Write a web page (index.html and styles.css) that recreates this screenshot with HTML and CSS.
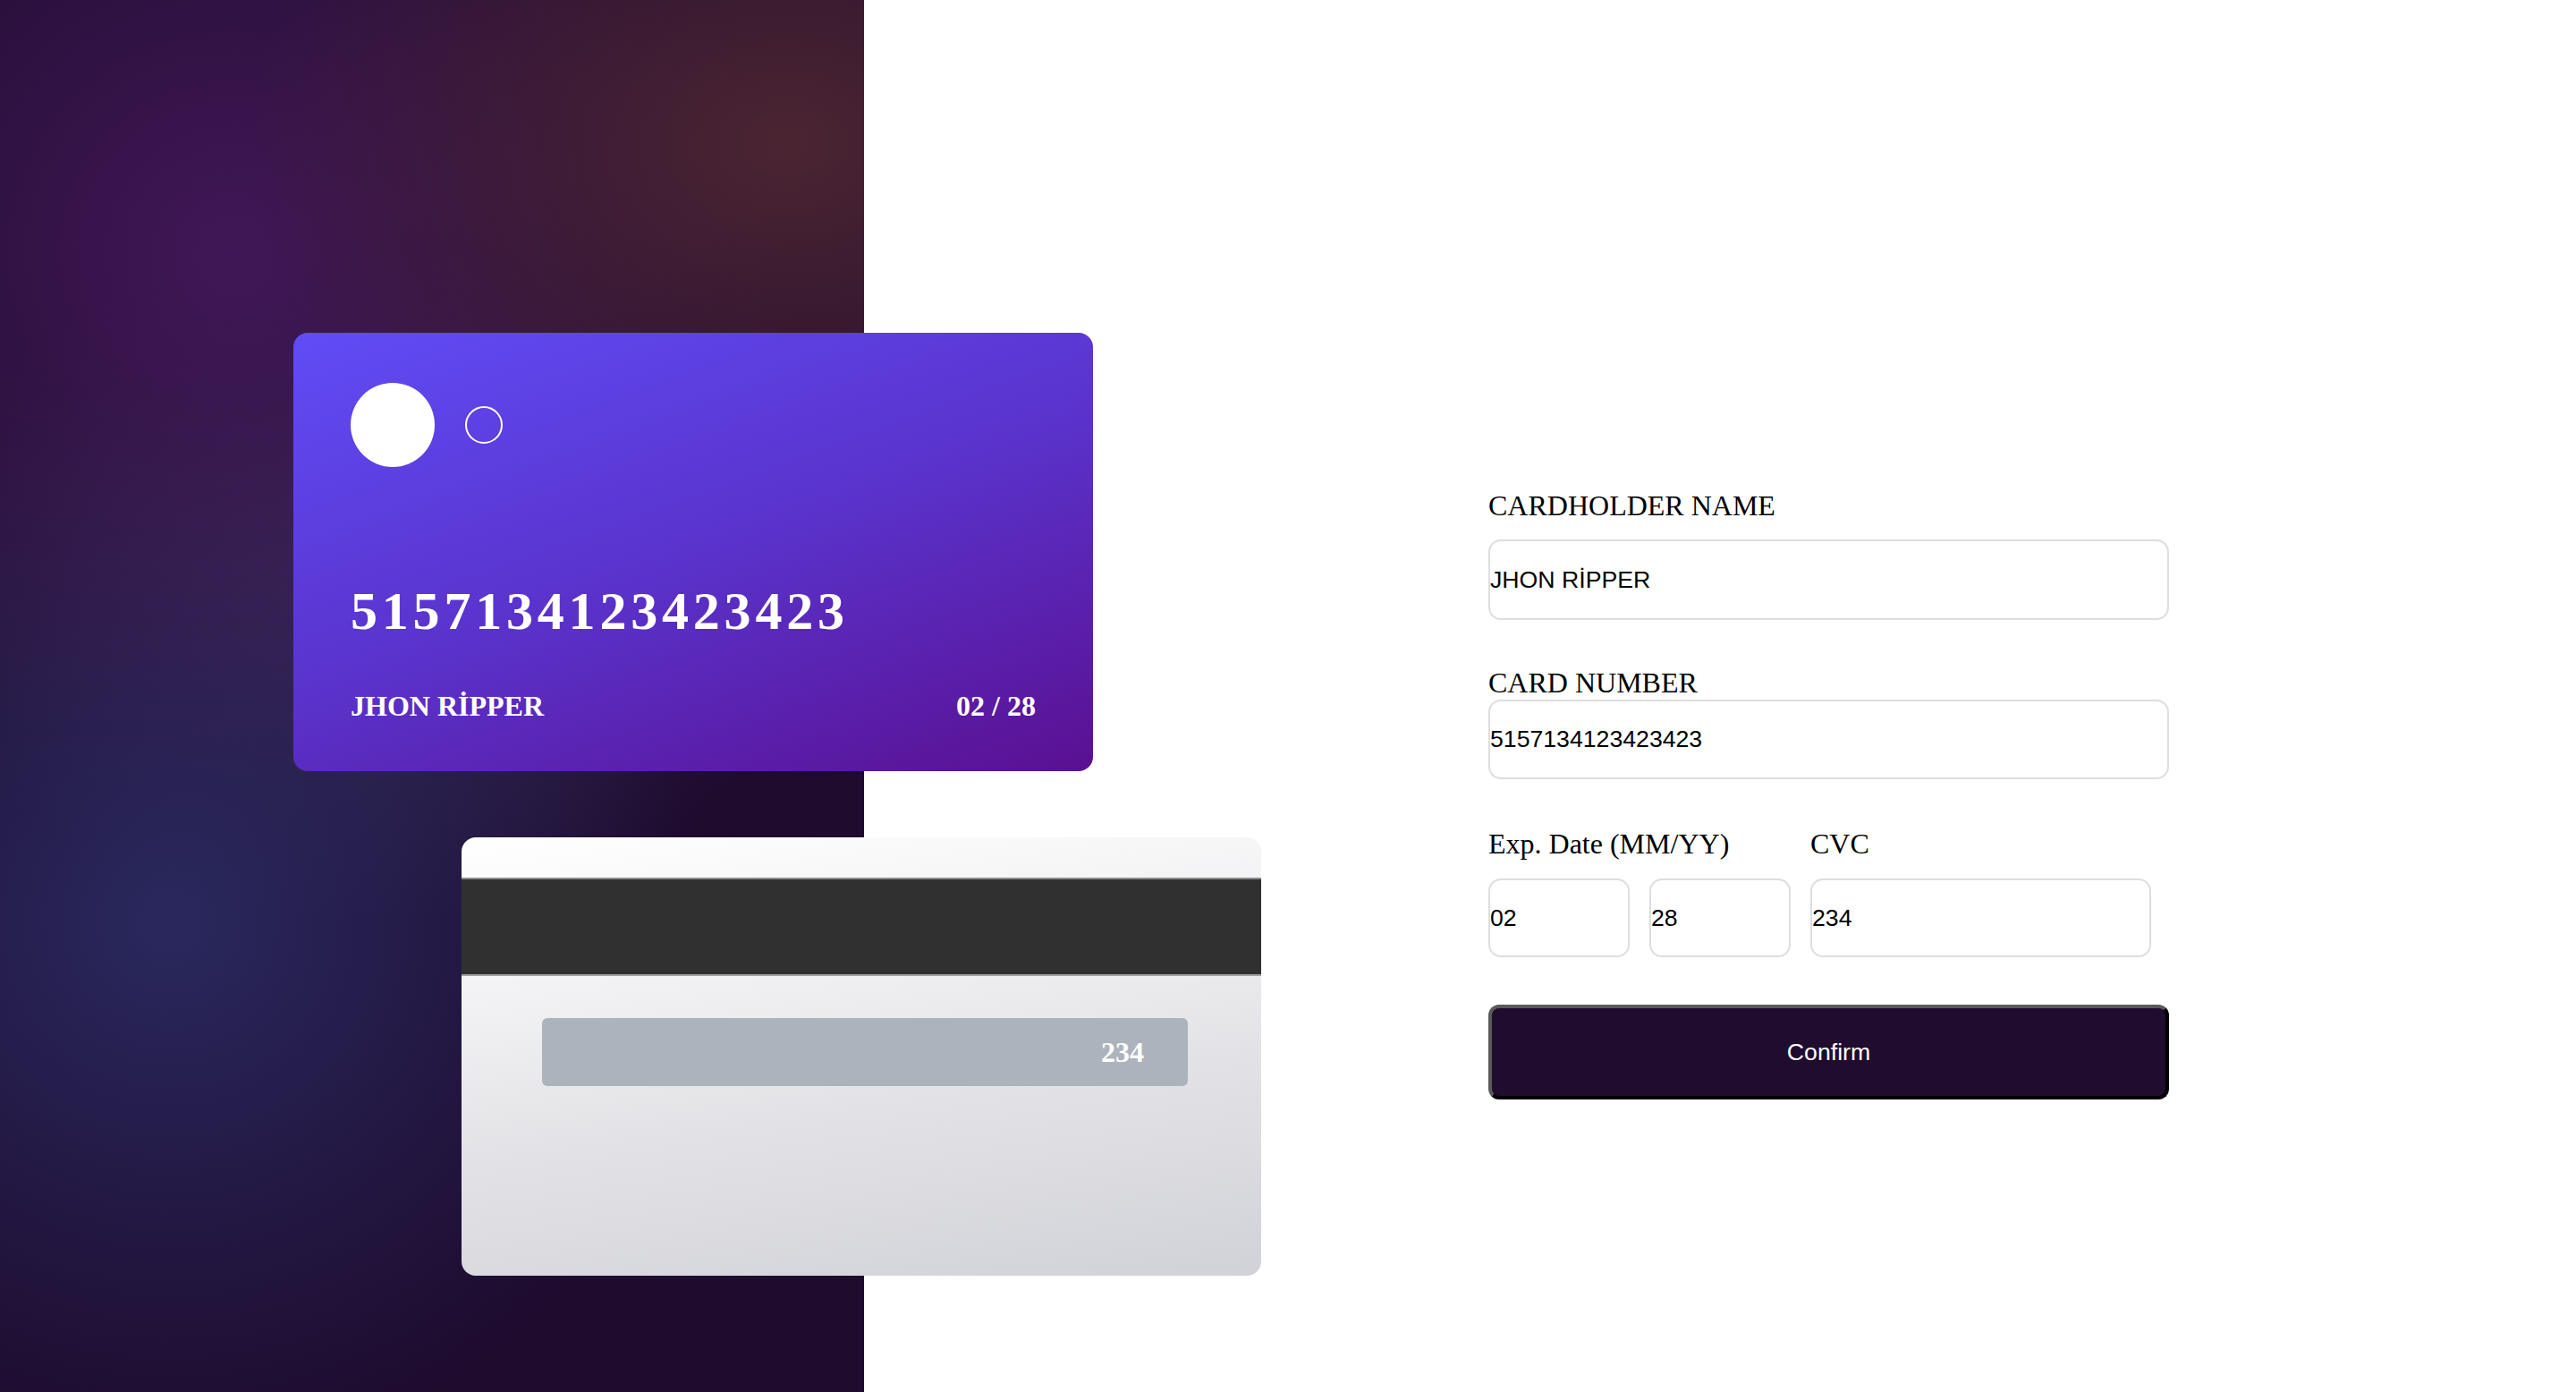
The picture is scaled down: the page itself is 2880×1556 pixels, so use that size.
FILE: index.html
```html
<!DOCTYPE html>
<html lang="en">
<head>
<meta charset="utf-8">
<title>Card Details</title>
<link rel="stylesheet" href="styles.css">
</head>
<body>
<div class="page">
  <aside class="visual">
    <div class="cards">
      <div class="card-front">
        <div class="logo"><span class="dot-solid"></span><span class="dot-ring"></span></div>
        <div class="card-number">5157134123423423</div>
        <div class="card-meta"><span>JHON RİPPER</span><span>02 / 28</span></div>
      </div>
      <div class="card-back">
        <div class="stripe"></div>
        <div class="cvc-box">234</div>
      </div>
    </div>
  </aside>
  <main class="form-area">
    <form class="form">
      <label class="label label-first" for="name">CARDHOLDER NAME</label>
      <input class="input input-name" id="name" type="text" value="JHON RİPPER">
      <label class="label label-number" for="number">CARD NUMBER</label>
      <input class="input input-number" id="number" type="text" value="5157134123423423">
      <div class="split">
        <span class="label">Exp. Date (MM/YY)</span>
        <span class="label">CVC</span>
        <div class="exp-inputs">
          <input class="input input-small" type="text" value="02">
          <input class="input input-small" type="text" value="28">
        </div>
        <input class="input input-small" type="text" value="234">
      </div>
      <button class="confirm" type="button">Confirm</button>
    </form>
  </main>
</div>
</body>
</html>
```
FILE: styles.css
```css
html, body {
  margin: 0;
  padding: 0;
  background: #ffffff;
  font-family: "Liberation Serif", "Times New Roman", serif;
}

.page {
  display: flex;
  min-height: 100vh;
}

.visual {
  flex: 0 0 966px;
  width: 966px;
  min-width: 0;
  height: 100vh;
  position: relative;
  z-index: 1;
  background:
    radial-gradient(ellipse 600px 460px at 880px 160px, rgba(78, 38, 50, 0.95), rgba(78, 38, 50, 0) 100%),
    radial-gradient(ellipse 620px 600px at 260px 280px, rgba(66, 24, 88, 0.95), rgba(66, 24, 88, 0) 100%),
    radial-gradient(ellipse 600px 600px at 190px 1030px, rgba(42, 42, 96, 0.95), rgba(42, 42, 96, 0) 100%),
    radial-gradient(ellipse 520px 380px at 400px 650px, rgba(58, 44, 84, 0.85), rgba(58, 44, 84, 0) 100%),
    #1e0b2e;
}

.cards {
  display: flex;
  flex-direction: column;
  gap: 74px;
  padding: 372px 0 0 328px;
}

.card-front {
  width: 894px;
  height: 490px;
  box-sizing: border-box;
  padding: 56px 64px 0;
  border-radius: 16px;
  background: linear-gradient(160deg, #604cf6 0%, #5a33cc 50%, #5a1092 100%);
  color: #ffffff;
}

.logo {
  display: flex;
  align-items: center;
  gap: 34px;
  height: 94px;
}

.dot-solid {
  width: 94px;
  height: 94px;
  border-radius: 50%;
  background: #ffffff;
}

.dot-ring {
  width: 42px;
  height: 42px;
  box-sizing: border-box;
  border: 2px solid #ffffff;
  border-radius: 50%;
}

.card-number {
  margin-top: 126px;
  font-weight: 700;
  font-size: 60px;
  line-height: 70px;
  letter-spacing: 4.8px;
}

.card-meta {
  margin-top: 53px;
  display: flex;
  justify-content: space-between;
  font-weight: 700;
  font-size: 32px;
  line-height: 36px;
}

.card-back {
  margin-left: 188px;
  width: 894px;
  height: 490px;
  box-sizing: border-box;
  padding-top: 45px;
  border-radius: 16px;
  overflow: hidden;
  background: linear-gradient(172deg, #ffffff 0%, #f2f2f4 30%, #e2e2e6 60%, #d1d2d8 100%);
}

.stripe {
  height: 110px;
  box-sizing: border-box;
  background: #303030;
  border-top: 2px solid #8c8c8c;
  border-bottom: 2px solid #a0a0a0;
}

.cvc-box {
  margin: 47px 0 0 90px;
  width: 722px;
  height: 76px;
  box-sizing: border-box;
  padding-right: 49px;
  border-radius: 6px;
  background: #adb3bc;
  display: flex;
  align-items: center;
  justify-content: flex-end;
  font-weight: 700;
  font-size: 32px;
  color: #ffffff;
}

.form-area {
  flex: 1;
  min-width: 0;
  padding: 547px 0 0 698px;
}

.form {
  width: 761px;
  display: flex;
  flex-direction: column;
}

.label {
  font-size: 32px;
  line-height: 36px;
  color: #000000;
}

.label-first {
  margin-bottom: 20px;
}

.label-number {
  margin-top: 52px;
  margin-bottom: 1px;
}

.input {
  box-sizing: border-box;
  border: 2px solid #dedede;
  border-radius: 14px;
  padding: 0;
  margin: 0;
  background: #ffffff;
  font-family: "Liberation Sans", Arial, sans-serif;
  font-size: 26.67px;
  color: #000000;
  outline: none;
}

.input-name {
  height: 90px;
}

.input-number {
  height: 89px;
}

.split {
  margin-top: 54px;
  display: grid;
  grid-template-columns: 338px 381px;
  column-gap: 22px;
  row-gap: 21px;
}

.exp-inputs {
  display: grid;
  grid-template-columns: 158px 158px;
  column-gap: 22px;
}

.input-small {
  height: 88px;
  width: 100%;
}

.confirm {
  margin-top: 53px;
  height: 106px;
  box-sizing: border-box;
  border: 4px solid;
  border-color: #5a5a5a #000000 #000000 #5a5a5a;
  border-radius: 12px;
  background: #200c2f;
  color: #ffffff;
  font-family: "Liberation Sans", Arial, sans-serif;
  font-size: 26.67px;
  padding: 0;
}
```
